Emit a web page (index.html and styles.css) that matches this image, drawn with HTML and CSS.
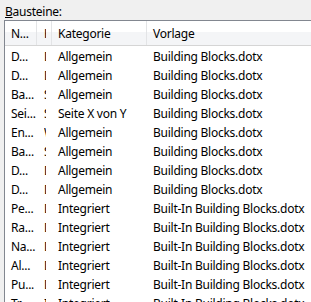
FILE: index.html
```html
<!DOCTYPE html>
<html lang="de">
<head>
    <meta charset="UTF-8">
    <title>Bausteine</title>
    <link rel="stylesheet" href="styles.css">
</head>
<body>

    <div class="label"><u>B</u>austeine:</div>

    <div class="list">
        <div class="row head">
            <div class="cell">N...</div>
            <div class="cell clip"><span>Kategorie</span></div>
            <div class="cell">Kategorie</div>
            <div class="cell">Vorlage</div>
        </div>

        <div class="row"><div class="cell">D...</div><div class="cell clip"><span>Datum</span></div><div class="cell">Allgemein</div><div class="cell">Building Blocks.dotx</div></div>
        <div class="row"><div class="cell">D...</div><div class="cell clip"><span>Datum</span></div><div class="cell">Allgemein</div><div class="cell">Building Blocks.dotx</div></div>
        <div class="row"><div class="cell">Ba...</div><div class="cell clip"><span>Seite</span></div><div class="cell">Allgemein</div><div class="cell">Building Blocks.dotx</div></div>
        <div class="row"><div class="cell">Sei...</div><div class="cell clip"><span>Seite</span></div><div class="cell">Seite X von Y</div><div class="cell">Building Blocks.dotx</div></div>
        <div class="row"><div class="cell">En...</div><div class="cell clip"><span>Wasser</span></div><div class="cell">Allgemein</div><div class="cell">Building Blocks.dotx</div></div>
        <div class="row"><div class="cell">Ba...</div><div class="cell clip"><span>Seite</span></div><div class="cell">Allgemein</div><div class="cell">Building Blocks.dotx</div></div>
        <div class="row"><div class="cell">D...</div><div class="cell clip"><span>Datum</span></div><div class="cell">Allgemein</div><div class="cell">Building Blocks.dotx</div></div>
        <div class="row"><div class="cell">D...</div><div class="cell clip"><span>Datum</span></div><div class="cell">Allgemein</div><div class="cell">Building Blocks.dotx</div></div>
        <div class="row"><div class="cell">Pe...</div><div class="cell clip"><span>Deckblatt</span></div><div class="cell">Integriert</div><div class="cell">Built-In Building Blocks.dotx</div></div>
        <div class="row"><div class="cell">Ra...</div><div class="cell clip"><span>Deckblatt</span></div><div class="cell">Integriert</div><div class="cell">Built-In Building Blocks.dotx</div></div>
        <div class="row"><div class="cell">Na...</div><div class="cell clip"><span>Deckblatt</span></div><div class="cell">Integriert</div><div class="cell">Built-In Building Blocks.dotx</div></div>
        <div class="row"><div class="cell">Al...</div><div class="cell clip"><span>Deckblatt</span></div><div class="cell">Integriert</div><div class="cell">Built-In Building Blocks.dotx</div></div>
        <div class="row"><div class="cell">Pu...</div><div class="cell clip"><span>Deckblatt</span></div><div class="cell">Integriert</div><div class="cell">Built-In Building Blocks.dotx</div></div>
        <div class="row"><div class="cell">Tr...</div><div class="cell clip"><span>Inhalt</span></div><div class="cell">Integriert</div><div class="cell">Built-In Building Blocks.dotx</div></div>
    </div>

</body>
</html>
```

FILE: styles.css
```css
html, body {
    margin: 0;
    height: 100%;
    overflow: hidden;
}

body {
    font-family: 'Noto Sans', 'Open Sans', sans-serif;
    font-size: 12px;
    letter-spacing: -0.25px;
    color: #000;
    background: #f0f0f0;
}

.label {
    padding: 4px 0 0 5px;
    height: 16px;
    line-height: 16px;
}

.list {
    width: 340px;
    height: 300px;
    margin-left: 4px;
    background: white;
    border-top: 1px solid #828790;
    border-left: 1px solid #828790;
}

.row {
    display: grid;
    grid-template-columns: 32px 15px 95px 1fr;
    height: 19px;
    line-height: 19px;
}

.cell {
    padding-left: 6px;
    white-space: nowrap;
    overflow: hidden;
}

.cell.clip {
    padding-left: 7px;
}

.cell.clip span {
    display: block;
    width: 2px;
    overflow: hidden;
}

.head {
    height: 24px;
    line-height: 22px;
    margin-bottom: 1px;
    background: linear-gradient(#ffffff 0%, #ffffff 45%, #f4f5f7 46%, #f4f5f7 100%);
    border-bottom: 1px solid #d5d5d5;
}

.head .cell {
    padding-top: 2px;
    border-right: 1px solid #e3e4e6;
}

.head .cell:last-child {
    border-right: none;
}
```
